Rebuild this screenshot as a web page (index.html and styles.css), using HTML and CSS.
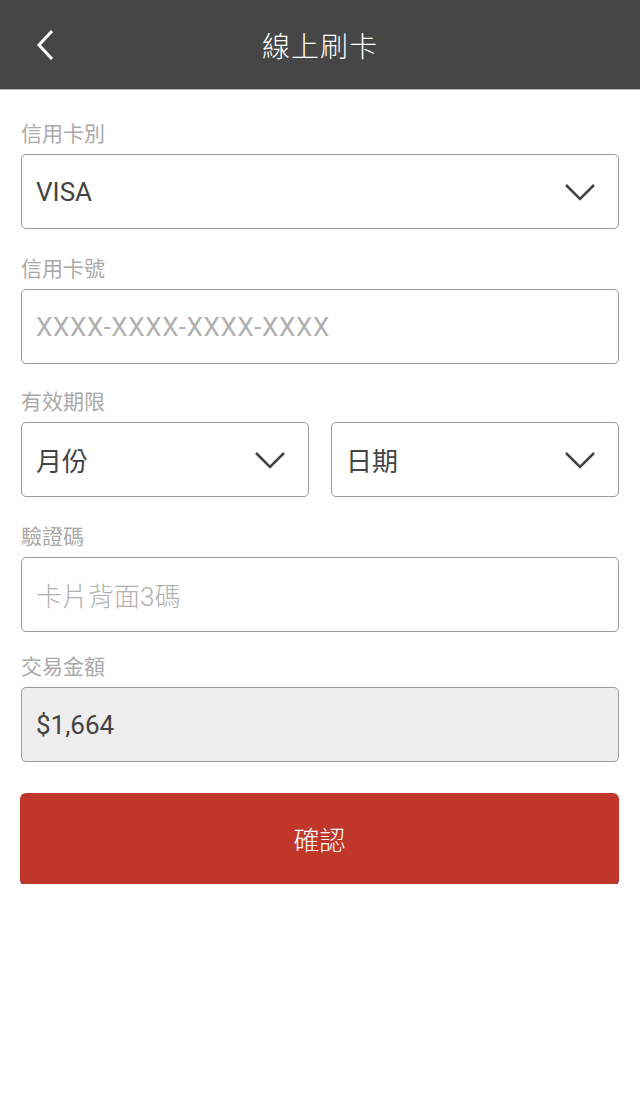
FILE: index.html
```html
<!DOCTYPE html>
<html lang="zh-Hant">
<head>
<meta charset="utf-8">
<title>線上刷卡</title>
<link rel="stylesheet" href="styles.css">
</head>
<body>
<header class="topbar">
  <span class="back">
    <svg width="20" height="34" viewBox="0 0 20 34"><path d="M16 2 L3 16 L16 30" fill="none" stroke="#fff" stroke-width="3"/></svg>
  </span>
  <h1 class="title">線上刷卡</h1>
</header>
<main class="form">
  <div class="group">
    <div class="label">信用卡別</div>
    <div class="field select"><span class="value">VISA</span><svg class="chev" width="32" height="20" viewBox="0 0 32 20"><path d="M2 3 L16 17 L30 3" fill="none" stroke="#444" stroke-width="2.6"/></svg></div>
  </div>
  <div class="group">
    <div class="label">信用卡號</div>
    <div class="field"><span class="placeholder wide">XXXX-XXXX-XXXX-XXXX</span></div>
  </div>
  <div class="group tight">
    <div class="label">有效期限</div>
    <div class="row">
      <div class="field select"><span class="value">月份</span><svg class="chev" width="32" height="20" viewBox="0 0 32 20"><path d="M2 3 L16 17 L30 3" fill="none" stroke="#444" stroke-width="2.6"/></svg></div>
      <div class="field select"><span class="value">日期</span><svg class="chev" width="32" height="20" viewBox="0 0 32 20"><path d="M2 3 L16 17 L30 3" fill="none" stroke="#444" stroke-width="2.6"/></svg></div>
    </div>
  </div>
  <div class="group">
    <div class="label">驗證碼</div>
    <div class="field"><span class="placeholder">卡片背面3碼</span></div>
  </div>
  <div class="group short">
    <div class="label">交易金額</div>
    <div class="field readonly"><span class="value">$1,664</span></div>
  </div>
  <button class="submit">確認</button>
</main>
</body>
</html>
```
FILE: styles.css
```css
* { box-sizing: border-box; }
html, body { margin: 0; padding: 0; background: #fff; }
body {
  font-family: Roboto, "Noto Sans CJK TC", sans-serif;
  width: 640px;
}
.topbar {
  height: 90px;
  background: #464646;
  border-bottom: 1px solid #b5b5b5;
  display: flex;
  align-items: center;
  justify-content: center;
  position: relative;
}
.back {
  position: absolute;
  left: 36px;
  top: 29px;
  width: 20px;
  height: 34px;
  display: block;
}
.back svg { display: block; }
.title {
  margin: 0;
  color: #fff;
  font-weight: 300;
  font-size: 28px;
  letter-spacing: 1px;
  font-family: "Noto Sans CJK TC", sans-serif;
}
.form {
  padding: 4px 21px 0 21px;
  display: flex;
  flex-direction: column;
}
.group { padding-top: 24px; }
.group.tight { padding-top: 22px; }
.group.short { padding-top: 19px; }
.label {
  font-family: "Noto Sans CJK TC", sans-serif;
  font-size: 21px;
  line-height: 28px;
  color: #a9a9a9;
  margin-bottom: 8px;
}
.field {
  height: 75px;
  border: 1.5px solid #9a9a9a;
  border-radius: 5px;
  display: flex;
  align-items: center;
  justify-content: space-between;
  padding: 0 22px 0 14px;
  font-size: 26px;
  background: #fff;
}
.value { color: #444; }
.placeholder { color: #b0b0b0; font-weight: 300; }
.placeholder.wide { letter-spacing: 0.7px; font-weight: 400; }
.field.readonly { background: #eeeeee; }
.chev { display: block; }
.row {
  display: grid;
  grid-template-columns: 1fr 1fr;
  column-gap: 22px;
}
.submit {
  margin-top: 31px;
  height: 91px;
  width: 599px;
  margin-left: -1px;
  border: none;
  border-radius: 6px;
  background: #c0372a;
  box-shadow: 0 2px 0 #7e3b33;
  color: #fff;
  font-family: "Noto Sans CJK TC", sans-serif;
  font-weight: 300;
  font-size: 26px;
  cursor: pointer;
}
```
